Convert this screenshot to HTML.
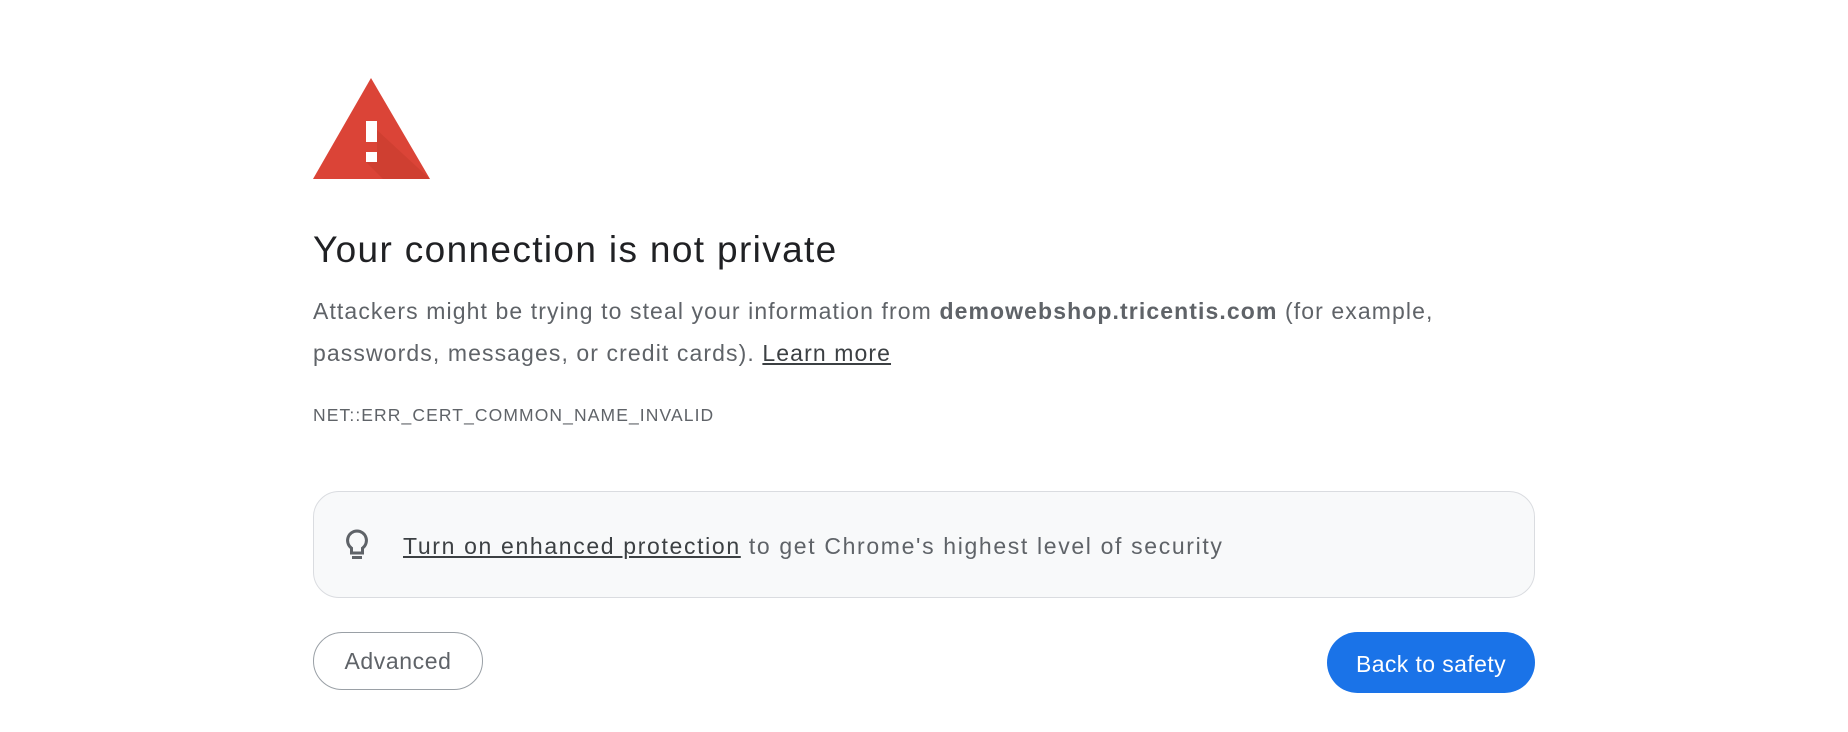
<!DOCTYPE html>
<html><head><meta charset="utf-8"><style>
html,body{margin:0;padding:0;background:#fff;width:1848px;height:732px;overflow:hidden;font-family:"Liberation Sans",sans-serif;}
.a{position:absolute;}
h1{position:absolute;left:313px;top:226px;margin:0;font-weight:normal;font-size:37px;letter-spacing:1.35px;color:#202124;white-space:nowrap;line-height:48px;}
.p{position:absolute;left:313px;top:290px;font-size:23px;letter-spacing:1.1px;line-height:42px;color:#5f6368;white-space:nowrap;}
.p b{color:#5f6368;}
.p u,.box u{color:#3c4043;}
.code{position:absolute;left:313px;top:405px;font-size:17.5px;letter-spacing:1.1px;color:#5f6368;}
.box{position:absolute;left:313px;top:491px;width:1220px;height:105px;border:1px solid #dadce0;border-radius:26px;background:#f8f9fa;}
.box span{position:absolute;left:89px;top:41px;font-size:23px;letter-spacing:1.65px;color:#5f6368;white-space:nowrap;}
.btn1{position:absolute;left:313px;top:632px;width:168px;height:56px;border:1px solid #9aa0a6;border-radius:29px;font-size:23px;letter-spacing:0.6px;color:#5f6368;text-align:center;line-height:56px;}
.btn2{position:absolute;left:1327px;top:632px;width:208px;height:61px;background:#1a73e8;border-radius:31px;font-size:23px;letter-spacing:0.4px;color:#fff;text-align:center;line-height:64px;}
</style></head><body>
<svg class="a" style="left:313px;top:78px" width="117" height="102" viewBox="0 0 117 102">
<polygon points="58,0 117,101 0,101" fill="#db4437"/>
<polygon points="64,52 117,101 70,101 53,84 53,74 64,74" fill="#c1392b" opacity=".45"/>
<rect x="53" y="43" width="11" height="21" fill="#fff"/>
<rect x="53" y="74" width="11" height="10" fill="#fff"/>
</svg>
<h1>Your connection is not private</h1>
<div class="p">Attackers might be trying to steal your information from <b>demowebshop.tricentis.com</b> (for example,<br>passwords, messages, or credit cards). <u>Learn more</u></div>
<div class="code">NET::ERR_CERT_COMMON_NAME_INVALID</div>
<div class="box">
<svg class="a" style="left:30px;top:36px" width="26" height="34" viewBox="0 0 26 34"><path d="M13 3a9.5 9.5 0 0 0-5.5 17.2V25h11v-4.8A9.5 9.5 0 0 0 13 3z" fill="none" stroke="#5f6368" stroke-width="3"/><rect x="8" y="28" width="10" height="3" fill="#5f6368"/></svg>
<span><u>Turn on enhanced protection</u> to get Chrome's highest level of security</span>
</div>
<div class="btn1">Advanced</div>
<div class="btn2">Back to safety</div>
</body></html>
